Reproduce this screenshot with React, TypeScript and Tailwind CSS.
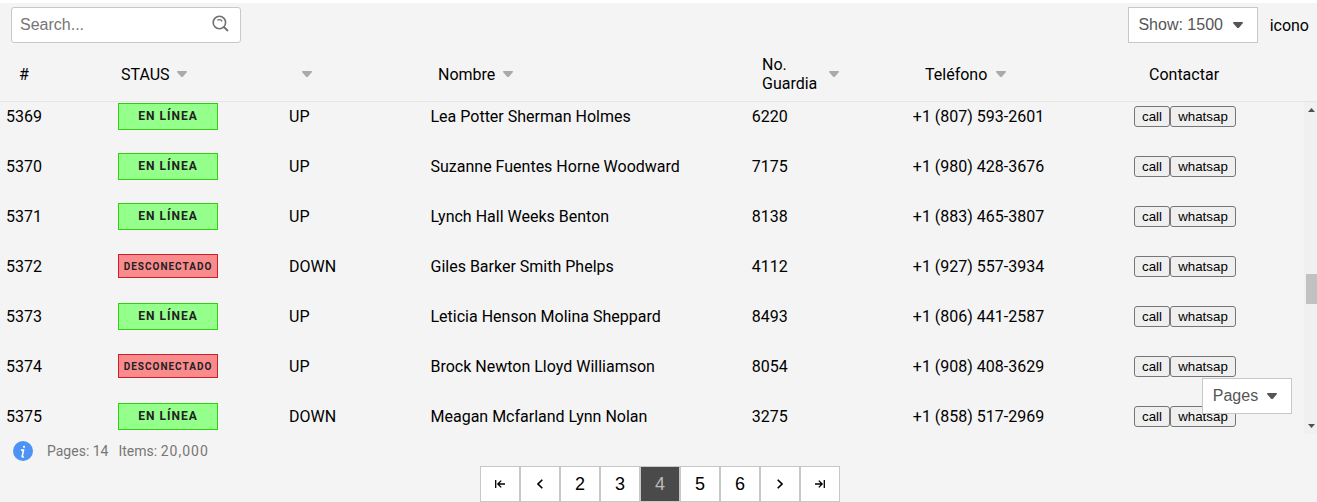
import React from "react";

type Row = {
  id: number;
  online: boolean;
  state: "UP" | "DOWN";
  name: string;
  guard: number;
  phone: string;
};

const rows: Row[] = [
  { id: 5369, online: true, state: "UP", name: "Lea Potter Sherman Holmes", guard: 6220, phone: "+1 (807) 593-2601" },
  { id: 5370, online: true, state: "UP", name: "Suzanne Fuentes Horne Woodward", guard: 7175, phone: "+1 (980) 428-3676" },
  { id: 5371, online: true, state: "UP", name: "Lynch Hall Weeks Benton", guard: 8138, phone: "+1 (883) 465-3807" },
  { id: 5372, online: false, state: "DOWN", name: "Giles Barker Smith Phelps", guard: 4112, phone: "+1 (927) 557-3934" },
  { id: 5373, online: true, state: "UP", name: "Leticia Henson Molina Sheppard", guard: 8493, phone: "+1 (806) 441-2587" },
  { id: 5374, online: false, state: "UP", name: "Brock Newton Lloyd Williamson", guard: 8054, phone: "+1 (908) 408-3629" },
  { id: 5375, online: true, state: "DOWN", name: "Meagan Mcfarland Lynn Nolan", guard: 3275, phone: "+1 (858) 517-2969" },
];

const columns = "grid grid-cols-[112px_171px_141.5px_321.3px_161px_221.2px_170px] items-center";

function Caret({ className }: { className: string }) {
  return (
    <svg viewBox="0 0 10 6" className={`h-[6px] w-[10px] shrink-0 ${className}`} fill="currentColor">
      <path d="M0.3 0h9.4L10 .9 5.7 6H4.3L0 .9z" />
    </svg>
  );
}

function SearchBox() {
  return (
    <label className="flex h-9 w-[230px] items-center rounded-[3px] border border-[#c8c8c8] bg-white pl-2 pr-[11px]">
      <input
        placeholder="Search..."
        className="w-[190px] min-w-0 bg-transparent pb-px font-['Liberation_Sans',Arial,sans-serif] text-base text-[#555] outline-none placeholder:text-[#757575]"
      />
      <svg viewBox="0 0 17 17" className="mb-[3px] ml-auto h-[17px] w-[17px] shrink-0" fill="none" stroke="#707070" strokeWidth="1.6">
        <circle cx="7.4" cy="7.5" r="6.2" />
        <path d="M11.9 12l4.1 4" strokeWidth="1.8" />
        <path d="M5.4 5.3C6.8 4.2 9 4.4 10.1 6.3" strokeWidth="1.4" />
      </svg>
    </label>
  );
}

function Badge({ online }: { online: boolean }) {
  return online ? (
    <span className="flex h-[27px] w-[100px] items-center justify-center border border-[#2fd10f] bg-[#94ff8b] pb-px text-[12px] font-bold tracking-[1px] text-[#222]">
      EN LÍNEA
    </span>
  ) : (
    <span className="flex h-6 w-[100px] items-center justify-center border border-[#c9202e] bg-[#f98b8d] text-[10px] font-bold tracking-[1px] text-[#222]">
      DESCONECTADO
    </span>
  );
}

const action =
  "h-[21px] rounded-[3px] border border-[#767676] bg-[#efefef] text-center font-['Liberation_Sans',Arial,sans-serif] text-[13.333px] leading-[15px] text-black";

const page =
  "flex h-9 w-10 items-center justify-center border border-[#c8c8c8] bg-white font-['Liberation_Sans',Arial,sans-serif] text-[18px] text-black";

function ArrowEnd({ className = "" }: { className?: string }) {
  return (
    <svg viewBox="0 0 10 8" className={`h-2 w-[10px] ${className}`} fill="none" stroke="currentColor" strokeWidth="1.3">
      <path d="M9.3 0v8M0 4h7M3.8.6L7.2 4 3.8 7.4" />
    </svg>
  );
}

function Chevron({ className = "" }: { className?: string }) {
  return (
    <svg viewBox="0 0 6 10" className={`h-[10px] w-[6px] ${className}`} fill="none" stroke="currentColor" strokeWidth="1.6">
      <path d="M.7.7L5 5 .7 9.3" />
    </svg>
  );
}

export default function App() {
  return (
    <div className="relative flex h-[502px] w-[1317px] flex-col overflow-hidden border-t-[3px] border-white bg-[#f4f4f4] font-[Roboto,sans-serif] text-base text-black shadow-[inset_1px_0_0_#f1f5f9]">
      <div className="flex h-[45px] shrink-0 items-start justify-between pl-[11px] pr-2 pt-1">
        <SearchBox />
        <div className="flex items-center">
          <button className="flex h-9 w-[130px] items-center border border-[#c8c8c8] bg-white pb-px pl-[9.8px] font-['Liberation_Sans',Arial,sans-serif] text-[#555]">
            Show: 1500
            <Caret className="ml-[10px] mt-px text-[#555]" />
          </button>
          <span className="ml-3 pt-px">icono</span>
        </div>
      </div>

      <div className="grid h-[54px] shrink-0 grid-cols-[102px_181px_136px_324px_163px_224px_168px] items-center border-b border-[#e6e6e6] pl-[19px] leading-[19px]">
        <div>#</div>
        <div className="flex items-center">STAUS<Caret className="mb-[2px] ml-[7px] text-[#aaa]" /></div>
        <div className="flex items-center"><Caret className="mb-[2px] text-[#aaa]" /></div>
        <div className="flex items-center">Nombre<Caret className="mb-[2px] ml-2 text-[#aaa]" /></div>
        <div className="flex items-center pb-px"><span className="w-[67px]">No. Guardia</span><Caret className="mb-px text-[#aaa]" /></div>
        <div className="flex items-center">Teléfono<Caret className="mb-[2px] ml-[9px] text-[#aaa]" /></div>
        <div>Contactar</div>
      </div>

      <div className="flex h-[332px] shrink-0 overflow-hidden">
        <div className="-mt-[11px] w-[1304px] shrink-0">
          {rows.map((r) => (
            <div key={r.id} className={`${columns} h-[50px] pl-[6px]`}>
              <div className="pt-[2px]">{r.id}</div>
              <div><Badge online={r.online} /></div>
              <div className="pt-[2px]">{r.state}</div>
              <div className="pt-[2px]">{r.name}</div>
              <div className="pt-[2px]">{r.guard}</div>
              <div className="pt-[2px]">{r.phone}</div>
              <div className="flex">
                <button className={`${action} w-9`}>call</button>
                <button className={`${action} w-[66px]`}>whatsap</button>
              </div>
            </div>
          ))}
        </div>
        <div className="flex w-[13px] flex-col items-end bg-[#f0f0f0]">
          <svg viewBox="0 0 7 4" className="mr-[2px] mt-[6px] h-1 w-[7px]" fill="#505050"><path d="M0 4L3.5 0 7 4z" /></svg>
          <div className="mt-[162px] h-[30px] w-[11px] bg-[#c1c1c1]" />
          <svg viewBox="0 0 7 4" className="mb-[6px] mr-[2px] mt-auto h-1 w-[7px]" fill="#505050"><path d="M0 0h7L3.5 4z" /></svg>
        </div>
      </div>

      <div className="flex h-8 shrink-0 items-center pl-[13px] text-[14px] text-[#777]">
        <span className="mt-[2px] flex h-5 w-5 items-center justify-center rounded-full bg-[#4d93f5]">
          <svg viewBox="0 0 6 13" className="h-[13px] w-[6px]" fill="none" stroke="white" strokeWidth="1.6">
            <path d="M1 5.1h2.5L2.2 11.5q0 .6 1.6.2" />
            <circle cx="4" cy="1.8" r="1.1" fill="white" stroke="none" />
          </svg>
        </span>
        <span className="ml-[14px] mt-[2px]">Pages: 14</span>
        <span className="ml-[10px] mt-[2px]">Items: <span className="tracking-[1px]">20,000</span></span>
      </div>

      <div className="flex shrink-0 pl-[480px]">
        <button className={page}><ArrowEnd className="rotate-180" /></button>
        <button className={page}><Chevron className="rotate-180" /></button>
        <button className={page}>2</button>
        <button className={page}>3</button>
        <button className="flex h-9 w-10 items-center justify-center border border-[#c8c8c8] bg-[#4a4a4a] font-['Liberation_Sans',Arial,sans-serif] text-[18px] text-[#bbb]">4</button>
        <button className={page}>5</button>
        <button className={page}>6</button>
        <button className={page}><Chevron /></button>
        <button className={page}><ArrowEnd /></button>
      </div>

      <button className="absolute left-[1202px] top-[375px] flex h-9 w-[90px] items-center border border-[#c8c8c8] bg-white pb-px pl-[9.8px] font-['Liberation_Sans',Arial,sans-serif] text-[#555]">
        Pages
        <Caret className="ml-[9px] mt-px text-[#555]" />
      </button>
    </div>
  );
}
